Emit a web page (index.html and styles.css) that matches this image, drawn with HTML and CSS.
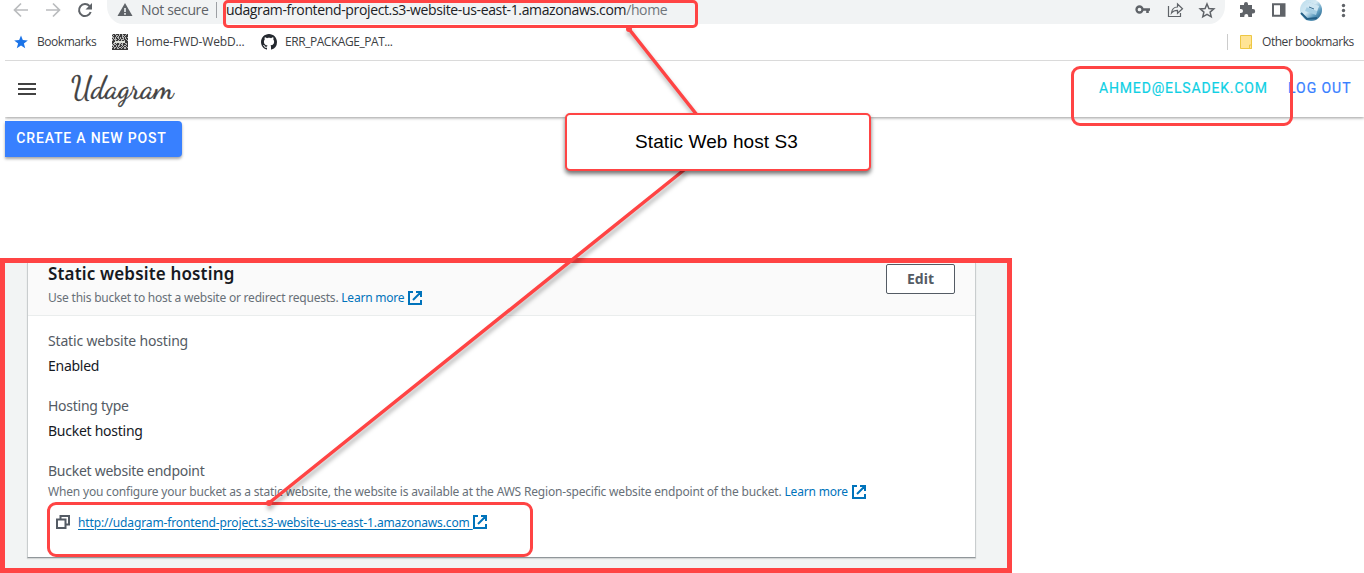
FILE: index.html
```html
<!DOCTYPE html>
<html lang="en">
<head>
<meta charset="utf-8">
<title>Udagram</title>
<link rel="stylesheet" href="styles.css">
</head>
<body>
<svg class="defs" aria-hidden="true">
  <symbol id="external" viewBox="0 0 14 14"><path d="M5 1H1v12h12V9M8 1h5v5M13 1 5 9" fill="none" stroke="currentColor" stroke-width="2"/></symbol>
</svg>
<div class="toolbar">
  <svg class="nav" viewBox="0 0 107 24" fill="none" stroke-width="1.7">
    <path d="M28 10H15M21 3.500l-6.500 6.500 6.500 6.500M46 10h13M53 3.500l6.500 6.500-6.500 6.500" stroke="#babcbe"/>
    <path d="M89.500 6A6 6 0 1 0 90.700 12" stroke="#5f6368" stroke-width="2"/><path d="M92 3v6.500h-6.500z" fill="#5f6368"/>
  </svg>
  <div class="omnibox">
    <svg class="warn" viewBox="0 0 16 14"><path d="M8 0 15.500 13H.5z" fill="#5f6368"/><path d="M8 5v4M8 10v1.700" stroke="#f1f3f4" stroke-width="1.600"/></svg>
    <span class="secure">Not secure</span>
    <span class="bar"></span>
    <span class="url">udagram-frontend-project.s3-website-us-east-1.amazonaws.com<span class="path">/home</span></span>
    <svg class="actions" viewBox="0 0 90 24" fill="none" stroke="#5f6368">
      <circle cx="5.500" cy="9.500" r="3" stroke-width="2.300"/><path d="M8 9.500h8M13.500 10v3" stroke-width="2.600"/>
      <path d="M34.500 6v10.500h12V13" stroke-width="1.200"/><path d="M37.500 13c.5-4 3-6 6-6V4l5 4.700-5 4.600v-3c-2.500 0-4.500.7-6 2.700z" stroke-width="1.200"/>
      <path d="m73 4 1.900 4.500 4.900.4-3.700 3.200 1.100 4.700-4.200-2.500-4.200 2.500 1.100-4.700-3.700-3.200 4.900-.4z" stroke-width="1.500"/>
    </svg>
  </div>
  <svg class="menu-icons" viewBox="0 0 139 24">
    <path d="M15 5h4V4a2 2 0 0 1 4 0v1h4v4h1a2.200 2.200 0 0 1 0 4.400h-1V17h-3.700v-1a2 2 0 0 0-4 0v1H15v-4h1a2 2 0 0 0 0-4h-1z" fill="#5f6368"/>
    <path d="M48 4.200h11.500v11.500H48z" fill="none" stroke="#5f6368" stroke-width="2"/><path d="M55 4h5v12h-5z" fill="#5f6368"/>
    <defs><linearGradient id="globe" x2="1" y2="1"><stop offset="0" stop-color="#b9dcec"/><stop offset=".45" stop-color="#d5e9f3"/><stop offset=".7" stop-color="#5f9dc0"/><stop offset="1" stop-color="#154d74"/></linearGradient></defs>
    <circle cx="86" cy="10" r="11" fill="url(#globe)"/><path d="m84 2 10 4-3 9-11-4z" fill="#a6cee3"/><path d="m84 2 10 4-2 5-11-4z" fill="#cfe6f2"/><path d="m84 7 5 2" stroke="#396d91"/><path d="m76 13 6 6 10-1" fill="none" stroke="#245f86" stroke-width="2"/>
    <g fill="#5f6368"><circle cx="118.500" cy="5.500" r="1.700"/><circle cx="118.500" cy="10.500" r="1.700"/><circle cx="118.500" cy="15.500" r="1.700"/></g>
  </svg>
</div>
<div class="bookmarks">
  <svg class="bm-star" viewBox="0 0 14 14"><path d="m7 .5 1.800 4.600 5 .3-3.900 3.100 1.300 4.800L7 10.600l-4.200 2.700 1.300-4.800L.2 5.400l5-.3z" fill="#1a73e8"/></svg>
  <span class="bm-text">Bookmarks</span>
  <svg class="bm-code" viewBox="0 0 16 16"><path d="M0 0h16v16H0z" fill="#3a3a3a"/><g fill="none" stroke="#b8b8b8"><path d="M0 .5h16" stroke-dasharray="1 2 1 3"/><path d="M1 1.500h15" stroke-dasharray="1 2 2 1"/><path d="M0 2.500h16" stroke-dasharray="1 3 1 1"/><path d="M0 3.500h16" stroke-dasharray="2 1 1 1"/><path d="M1 4.500h15" stroke-dasharray="1 1 1 2"/><path d="M0 5.500h16" stroke-dasharray="1 1 3 2"/><path d="M0 6.500h16" stroke-dasharray="1 2"/><path d="M3 7.500h10M2 8.500h11" stroke="#dde0d8"/><path d="M1 9.500h15" stroke-dasharray="2 1 1 2"/><path d="M0 10.500h16" stroke-dasharray="1 1 2 3"/><path d="M0 11.500h16" stroke-dasharray="2 2 1 1"/><path d="M1 12.500h15" stroke-dasharray="1 2 1 1"/><path d="M0 13.500h16" stroke-dasharray="1 1 2 1"/><path d="M2 14.500h14" stroke-dasharray="1 2 2 2"/></g></svg>
  <span class="bm-text home">Home-FWD-WebD...</span>
  <svg class="bm-git" viewBox="0 0 16 16"><path d="M8 0C3.580 0 0 3.580 0 8c0 3.540 2.290 6.530 5.470 7.590.4.070.55-.17.55-.38 0-.19-.01-.82-.01-1.490-2.010.37-2.530-.49-2.690-.94-.09-.23-.48-.94-.82-1.130-.28-.15-.68-.52-.01-.53.63-.01 1.080.58 1.230.82.72 1.210 1.870.87 2.330.66.07-.52.28-.87.51-1.070-1.780-.2-3.640-.89-3.640-3.950 0-.87.31-1.590.82-2.150-.08-.2-.36-1.020.08-2.120 0 0 .67-.21 2.200.82.64-.18 1.320-.27 2-.27s1.360.09 2 .27c1.530-1.040 2.200-.82 2.200-.82.44 1.100.16 1.920.08 2.120.51.56.82 1.270.82 2.150 0 3.070-1.870 3.750-3.650 3.950.29.25.54.73.54 1.480 0 1.070-.01 1.930-.01 2.200 0 .21.15.46.55.38A8.010 8.010 0 0 0 16 8c0-4.420-3.580-8-8-8z" fill="#24292f"/></svg>
  <span class="bm-text err">ERR_PACKAGE_PAT...</span>
  <span class="bm-divider"></span>
  <svg class="bm-folder" viewBox="0 0 12 14"><path d="M.5.5h11v13H.5z" fill="#ffe495" stroke="#edc744"/><path d="M9.500 10h2v3.500h-2z" fill="#ffe495" stroke="#edc744"/></svg>
  <span class="bm-text other">Other bookmarks</span>
</div>
<header class="app-header">
  <span class="burger"></span>
  <span class="brand">Udagram</span>
  <span class="email">AHMED@ELSADEK.COM</span>
  <span class="logout">LOG OUT</span>
</header>
<main class="content">
  <button class="create">CREATE A NEW POST</button>
  <section class="aws">
    <div class="card">
      <div class="card-head">
        <div>
          <h2>Static website hosting</h2>
          <p class="sub head-sub">Use this bucket to host a website or redirect requests. <a>Learn more</a><svg class="ext"><use href="#external"/></svg></p>
        </div>
        <button class="edit">Edit</button>
      </div>
      <dl>
        <dt class="l1">Static website hosting</dt><dd>Enabled</dd>
        <dt class="l2">Hosting type</dt><dd class="v2">Bucket hosting</dd>
        <dt class="l3">Bucket website endpoint</dt>
      </dl>
      <p class="sub end-sub">When you configure your bucket as a static website, the website is available at the AWS Region-specific website endpoint of the bucket. <a>Learn more</a><svg class="ext"><use href="#external"/></svg></p>
      <div class="endpoint">
        <svg class="copy" viewBox="0 0 14 14" fill="none" stroke="#545b64" stroke-width="2"><path d="M1 4.500h8.500V13H1zM4.500 4V1H13v8.500h-3"/></svg>
        <a>http://udagram-frontend-project.s3-website-us-east-1.amazonaws.com&nbsp;</a><svg class="ext"><use href="#external"/></svg>
      </div>
    </div>
  </section>
</main>
<div class="mark mark-url"></div>
<div class="mark mark-email"></div>
<div class="mark mark-endpoint"></div>
<svg class="lines" viewBox="0 0 1364 573"><g stroke="#ff4444" stroke-width="3.500" stroke-linecap="round"><path d="M629 29 697 115M684 170 269 503"/></g><g fill="#ff4444"><circle cx="629" cy="29" r="3"/><circle cx="269" cy="503" r="3"/></g></svg>
<div class="callout">Static Web host S3</div>
</body>
</html>
```

FILE: styles.css
```css
* { box-sizing: border-box; }
body { margin: 0; width: 1364px; height: 573px; overflow: hidden; position: relative; background: #fff; font-family: "Noto Sans", sans-serif; }
p, h2, dl, dd { margin: 0; }
svg { display: block; flex: none; }
span, a { white-space: nowrap; }
.defs { position: absolute; width: 0; height: 0; }

.toolbar { display: flex; height: 24px; }
.nav { width: 107px; height: 24px; }
.omnibox { width: 1118px; height: 24px; background: #f1f3f4; border-radius: 0 0 16px 16px / 0 0 18px 18px; display: flex; align-items: flex-start; padding-left: 10px; }
.warn { width: 16px; height: 14px; margin-top: 3px; }
.secure { font-family: "Open Sans", sans-serif; font-size: 14px; line-height: 20px; color: #5f6368; margin-left: 8px; width: 75px; letter-spacing: -.35px; }
.bar { width: 1px; height: 16px; margin-top: 2px; background: #9da0a4; }
.url { font-family: "Open Sans", sans-serif; font-size: 14px; line-height: 20px; color: #202124; margin-left: 9px; width: 908px; letter-spacing: -.36px; }
.path { color: #70757a; }
.actions { width: 90px; height: 24px; }
.menu-icons { width: 139px; height: 24px; }

.bookmarks { display: flex; align-items: center; height: 36px; padding-left: 14px; }
.bm-star { width: 14px; height: 14px; }
.bm-text { font-family: "Open Sans", sans-serif; font-size: 12px; line-height: 18px; color: #3c4043; margin-left: 9px; width: 75px; letter-spacing: -.45px; }
.bm-code { width: 16px; height: 16px; }
.home { margin-left: 8px; width: 125px; letter-spacing: -.15px; }
.bm-git { width: 16px; height: 16px; }
.err { margin-left: 8px; width: 943px; }
.bm-divider { width: 1px; height: 16px; background: #ccc; margin-left: -1px; }
.bm-folder { width: 12px; height: 14px; margin-left: 12px; }
.other { margin-left: 10px; width: auto; }

.app-header { position: relative; z-index: 1; margin-left: 5px; height: 57px; border-top: 1px solid #dadada; background: #fff; display: flex; box-shadow: 0 1px 3px rgba(0,0,0,.4); clip-path: inset(0 0 -6px 0); font-family: Roboto, sans-serif; font-size: 14px; }
.burger { width: 18px; height: 12px; margin: 22px 0 0 13px; border-top: 2px solid #424242; border-bottom: 2px solid #424242; background: linear-gradient(#424242, #424242) 0 3px / 18px 2px no-repeat; }
.brand { font-family: "Dancing Script", cursive; font-weight: 400; font-size: 30px; line-height: 34px; color: #424242; margin: 10px 0 0 35px; width: 1028px; letter-spacing: .1px; -webkit-text-stroke: .3px #424242; }
.email, .logout { line-height: 20px; font-weight: 400; letter-spacing: .84px; margin-top: 17px; -webkit-text-stroke: .2px; }
.email { color: #10d0e4; width: 189px; }
.logout { color: #3880ff; letter-spacing: .95px; }

.content { padding-top: 4px; }
.create { display: block; margin: 0 0 0 5px; padding: 0 4px 2px 0; width: 177px; height: 36px; border: 0; border-radius: 0 4px 4px 0; background: #3880ff; color: #fff; font: 500 14px Roboto, sans-serif; letter-spacing: .84px; text-align: center; box-shadow: 0 2px 3px rgba(0,0,0,.35); }
.aws { width: 1012px; height: 315px; margin-top: 101px; border: 5px solid #ff4444; background: #f2f4f4; padding-left: 22px; }
.card { width: 949px; height: 295px; background: #fff; border: 1px solid #c9cdce; border-top: 0; border-bottom-color: #90969a; box-shadow: 0 1px 1px rgba(0,0,0,.12); }
.card-head { display: flex; justify-content: space-between; height: 53px; padding: 0 20px; background: #fafafa; border-bottom: 1px solid #eaeded; }
h2 { font-size: 17px; line-height: 22px; font-weight: 600; color: #16191f; letter-spacing: .16px; white-space: nowrap; }
.sub { display: flex; align-items: center; white-space: pre; font-size: 12px; line-height: 18px; color: #687078; letter-spacing: -.186px; }
.sub a, .endpoint a { color: #0073bb; }
.head-sub { margin-top: 4px; letter-spacing: -.22px; }
.ext { width: 14px; height: 14px; margin-left: 4px; color: #0073bb; }
.edit { width: 69px; height: 30px; margin: 1px 0 0; padding: 0 0 2px; border: 1px solid #545b64; border-radius: 2px; background: #fff; font: 700 14px "Noto Sans", sans-serif; color: #545b64; }
dl { padding: 14px 20px 0; font-size: 14px; line-height: 22px; letter-spacing: -.26px; }
dt { color: #545b64; }
.l1 { letter-spacing: -.17px; }
dd { color: #16191f; margin-top: 3px; }
.l2, .l3 { margin-top: 18px; }
.end-sub { margin: 1px 0 0 20px; }
.endpoint { display: flex; align-items: center; margin: 11px 0 0 28px; height: 20px; font-size: 12px; letter-spacing: -.12px; }
.copy { width: 14px; height: 14px; margin-right: 8px; }
.endpoint a { text-decoration: underline; text-underline-offset: 2px; }
.endpoint .ext { margin-left: 0; }

/* Annotation layer */
.mark { position: absolute; z-index: 2; border: 3px solid #ff4444; }
.mark-url { left: 223px; top: 0; width: 475px; height: 28px; border-radius: 5px; }
.mark-email { left: 1071px; top: 66px; width: 222px; height: 60px; border-radius: 9px; }
.mark-endpoint { left: 47px; top: 502px; width: 486px; height: 55px; border-radius: 9px; }
.lines { position: absolute; z-index: 3; inset: 0; width: 1364px; height: 573px; filter: drop-shadow(1px 4px 2px rgba(0,0,0,.3)); }
.callout { position: absolute; z-index: 4; left: 565px; top: 113px; width: 306px; height: 58px; border: 2px solid #ff4444; border-radius: 5px; background: #fff; box-shadow: 0 3px 4px rgba(0,0,0,.55); font: 19px/54px "Liberation Sans", Arial, sans-serif; color: #000; text-align: center; padding-right: 3px; letter-spacing: .1px; }
```
